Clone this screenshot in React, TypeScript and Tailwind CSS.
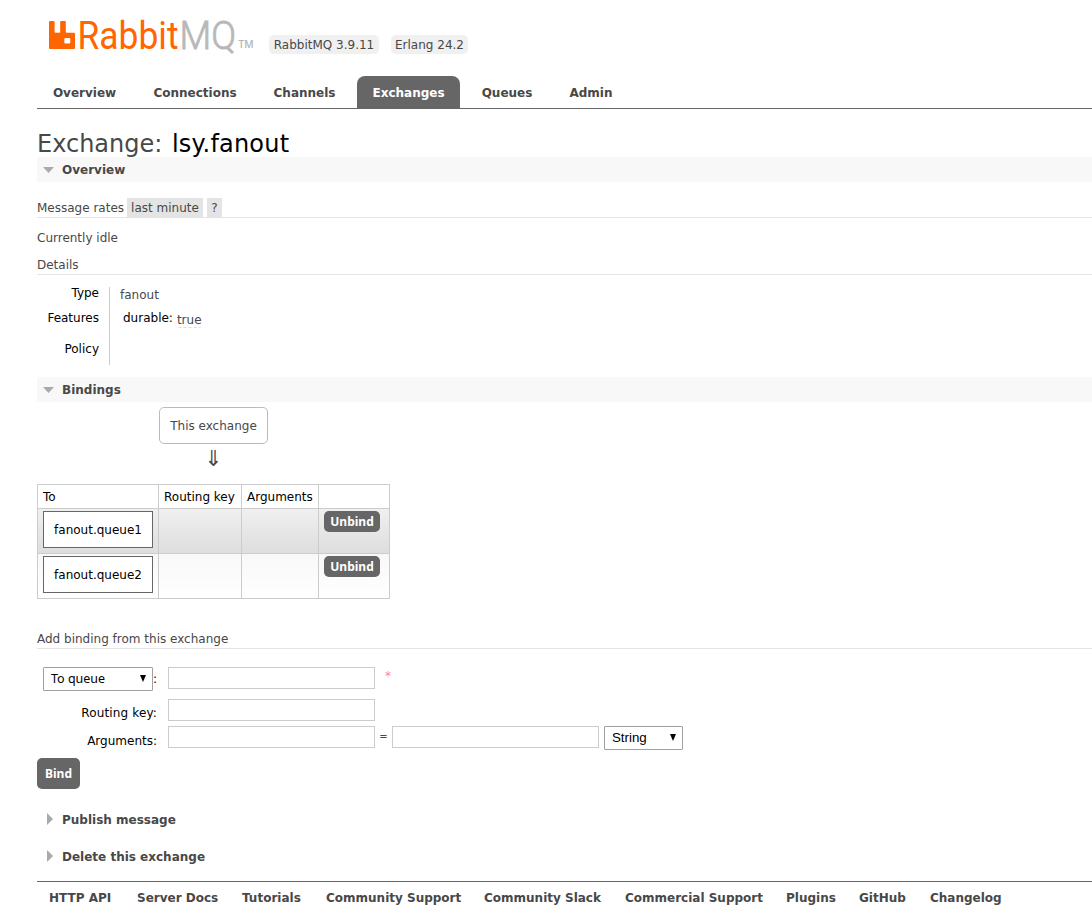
import { ReactNode } from "react";

const tabs = [
  { name: "Overview", width: "w-[95px]" },
  { name: "Connections", width: "w-[114px]" },
  { name: "Channels", width: "w-[93px]" },
  { name: "Exchanges", width: "w-[103px]", active: true },
  { name: "Queues", width: "w-[82px]" },
  { name: "Admin", width: "w-[74px]" },
];

const footerLinks = [
  { name: "HTTP API", width: "w-[88px]" },
  { name: "Server Docs", width: "w-[105px]" },
  { name: "Tutorials", width: "w-[84px]" },
  { name: "Community Support", width: "w-[158px]" },
  { name: "Community Slack", width: "w-[141px]" },
  { name: "Commercial Support", width: "w-[161px]" },
  { name: "Plugins", width: "w-[73px]" },
  { name: "GitHub", width: "w-[71px]" },
  { name: "Changelog", width: "w-[80px]" },
];

const bindings = [
  { queue: "fanout.queue1", row: "bg-linear-to-b from-[#f0f0f0] to-[#dddddd]" },
  { queue: "fanout.queue2", row: "bg-linear-to-b from-[#f8f8f8] to-white" },
];

function Logo() {
  return (
    <svg width="208" height="48" viewBox="0 -10 208 48" className="block">
      <path
        d="M1 0h3.600a1 1 0 0 1 1 1v9.700a1 1 0 0 0 1 1h3.600a1 1 0 0 0 1-1V1a1 1 0 0 1 1-1h3.600a1 1 0 0 1 1 1v9.700a1 1 0 0 0 1 1H25a1 1 0 0 1 1 1V27a1 1 0 0 1-1 1H1a1 1 0 0 1-1-1V1a1 1 0 0 1 1-1Zm15.500 17a1.200 1.200 0 0 0-1.200 1.200v3.100a1.200 1.200 0 0 0 1.200 1.200h3.600a1.200 1.200 0 0 0 1.200-1.200v-3.100a1.200 1.200 0 0 0-1.200-1.200Z"
        fill="#f60"
      />
      <g fontFamily="Roboto, sans-serif" fontSize="38.500">
        <text x="28.500" y="27.500" fill="#f60" textLength="101" lengthAdjust="spacingAndGlyphs">
          Rabbit
        </text>
        <text x="130.500" y="27.500" fill="#b8b8b8" stroke="#b8b8b8" strokeWidth="0.800" fontWeight="300" textLength="56.500" lengthAdjust="spacingAndGlyphs">
          MQ
        </text>
      </g>
      <text x="189.500" y="27" fill="#b0b0b0" stroke="#b0b0b0" strokeWidth="0.200" fontFamily="Open Sans, sans-serif" fontSize="10" textLength="15" lengthAdjust="spacingAndGlyphs">
        TM
      </text>
    </svg>
  );
}

function Section({ title, open }: { title: string; open?: boolean }) {
  return (
    <h2
      className={`flex h-[25px] items-center text-[12px] leading-[24px] font-bold ${
        open ? "bg-[#f8f8f8] pl-[6px]" : "pl-[10px]"
      }`}
    >
      {open ? (
        <svg width="11" height="6" className="mr-2">
          <path d="M0 0h11L5.500 6Z" fill="#aaa" />
        </svg>
      ) : (
        <svg width="6" height="12" className="mr-[9px] mb-[2px]">
          <path d="M0 0v12L6 6Z" fill="#aaa" />
        </svg>
      )}
      <span className="pt-px">{title}</span>
    </h2>
  );
}

function Select({ value, className }: { value: string; className: string }) {
  return (
    <div className={`flex h-6 items-center justify-between rounded-[1px] border border-[#a0a0a0] bg-white pr-[6px] pl-[7px] text-black ${className}`}>
      <span>{value}</span>
      <svg width="6" height="7" className="mb-px">
        <path d="M0 0h6L3 7Z" fill="#000" />
      </svg>
    </div>
  );
}

function Input() {
  return <input type="text" className="block h-[22px] w-[207px] border border-[#ccc] bg-white" />;
}

function Label({ children }: { children: ReactNode }) {
  return <div className="w-[120px] text-right text-black">{children}</div>;
}

export default function App() {
  return (
    <div className="h-[912px] overflow-hidden bg-white pl-[37px] font-['DejaVu_Sans',Verdana,sans-serif] text-[12px] leading-4 text-[#484848]">
      <header className="flex h-[76px] pt-[11px] pl-3">
        <Logo />
        <span className="mt-[24px] ml-3 h-[19px] w-[110px] rounded-[5px] bg-[#f0f0f0] text-center leading-[20px]">
          RabbitMQ 3.9.11
        </span>
        <span className="mt-[24px] ml-3 h-[19px] w-[77px] rounded-[5px] bg-[#f0f0f0] text-center leading-[20px]">
          Erlang 24.2
        </span>
      </header>

      <nav className="flex h-[33px] gap-[6px] border-b border-[#666] text-[12px] font-bold">
        {tabs.map((tab) => (
          <a
            key={tab.name}
            className={`h-8 text-center leading-[34px] whitespace-nowrap ${tab.width} ${
              tab.active ? "rounded-t-[8px] bg-[#666] text-white" : ""
            }`}
          >
            {tab.name}
          </a>
        ))}
      </nav>

      <h1 className="mt-5 flex h-7 gap-[9px] text-[24px] leading-[30px]">
        <span className="w-[126px]">Exchange:</span>
        <b className="font-normal tracking-[0.2px] text-black">lsy.fanout</b>
      </h1>

      <Section title="Overview" open />
      <div className="mt-4 flex h-5 gap-1 border-b border-[#e4e4e4] leading-[20px]">
        <span className="w-[86px] whitespace-nowrap">Message rates</span>
        <span className="h-[19px] w-[76px] bg-[#e4e4e4] text-center whitespace-nowrap">last minute</span>
        <span className="h-[19px] w-[15px] bg-[#e4e4e4] text-center">?</span>
      </div>
      <p className="mt-3">Currently idle</p>
      <h3 className="mt-[11px] h-[18px] border-b border-[#e4e4e4]">Details</h3>

      <div className="mt-3 flex h-[78px]">
        <div className="w-[73px] border-r border-[#ccc] pr-[10px] text-right text-black">
          <div className="-mt-[2px] h-[25px]">Type</div>
          <div className="h-[31px]">Features</div>
          <div>Policy</div>
        </div>
        <div className="pl-[10px]">
          <div className="h-[23px]">fanout</div>
          <div className="flex pl-[3px]">
            <span className="mr-1 text-black">durable:</span>
            <span className="mt-[2px] h-[16px] rounded-[3px] border-b border-dashed border-[#ddd]">true</span>
          </div>
        </div>
      </div>

      <div className="mt-3">
        <Section title="Bindings" open />
      </div>
      <div className="mt-[5px] flex w-[353px] flex-col items-center">
        <div className="h-[37px] w-[109px] rounded-[5px] border border-[#bbb] text-center leading-[36px]">
          This exchange
        </div>
        <div className="h-10 text-[22px] leading-[30px]">⇓</div>
      </div>

      <table className="w-[352px] table-fixed border-collapse border border-[#ccc] text-black">
        <colgroup>
          <col className="w-[121px]" />
          <col className="w-[83px]" />
          <col className="w-[77px]" />
          <col className="w-[71px]" />
        </colgroup>
        <thead>
          <tr className="h-6 text-left whitespace-nowrap">
            <th className="border border-[#ccc] p-0 pl-[5px] font-normal">To</th>
            <th className="border border-[#ccc] p-0 pl-[5px] font-normal">Routing key</th>
            <th className="border border-[#ccc] p-0 pl-[5px] font-normal">Arguments</th>
            <th className="border border-[#ccc] p-0" />
          </tr>
        </thead>
        <tbody>
          {bindings.map((b) => (
            <tr key={b.queue} className={`h-[45px] align-top ${b.row}`}>
              <td className="border border-[#ccc] p-0 pt-[2px] pl-[5px]">
                <div className="h-[37px] w-[110px] border border-[#666] bg-white text-center leading-[36px]">
                  {b.queue}
                </div>
              </td>
              <td className="border border-[#ccc]" />
              <td className="border border-[#ccc]" />
              <td className="border border-[#ccc] p-0 pt-[2px] pl-[5px]">
                <button className="block h-[21px] w-[56px] rounded-[5px] bg-[#666] font-['Noto_Sans',sans-serif] leading-[21px] font-bold text-white">
                  Unbind
                </button>
              </td>
            </tr>
          ))}
        </tbody>
      </table>

      <h3 className="mt-[31px] h-[19px] border-b border-[#e4e4e4] leading-[18px]">Add binding from this exchange</h3>

      <div className="mt-[18px] flex h-8">
        <div className="mr-[11px] flex w-[120px] justify-end text-black">
          <Select value="To queue" className="w-[110px] font-['Noto_Sans',sans-serif] text-[12.5px]" />
          <span className="w-1 pt-1">:</span>
        </div>
        <Input />
        <span className="ml-[10px] pt-px text-[#f88]">*</span>
      </div>
      <div className="flex h-[27px] gap-[11px]">
        <Label>
          <div className="pt-[6px] tracking-[0.15px]">Routing key:</div>
        </Label>
        <Input />
      </div>
      <div className="flex h-8">
        <Label>
          <div className="pt-[7px]">Arguments:</div>
        </Label>
        <div className="ml-[11px] flex">
          <Input />
          <span className="w-[17px] pt-[3px] text-center text-[10px]">=</span>
          <Input />
          <Select value="String" className="ml-[5px] w-[79px] font-['Liberation_Sans',Arial,sans-serif] text-[13.3px]" />
        </div>
      </div>
      <button className="block h-[31px] w-[43px] rounded-[5px] bg-[#666] font-['Noto_Sans',sans-serif] font-bold text-white">
        Bind
      </button>

      <div className="mt-[18px] flex flex-col gap-3">
        <Section title="Publish message" />
        <Section title="Delete this exchange" />
      </div>

      <footer className="mt-3 flex border-t border-[#666] pt-2 pl-3 text-[12px] font-bold whitespace-nowrap">
        {footerLinks.map((link) => (
          <a key={link.name} className={`shrink-0 ${link.width}`}>
            {link.name}
          </a>
        ))}
      </footer>
    </div>
  );
}
